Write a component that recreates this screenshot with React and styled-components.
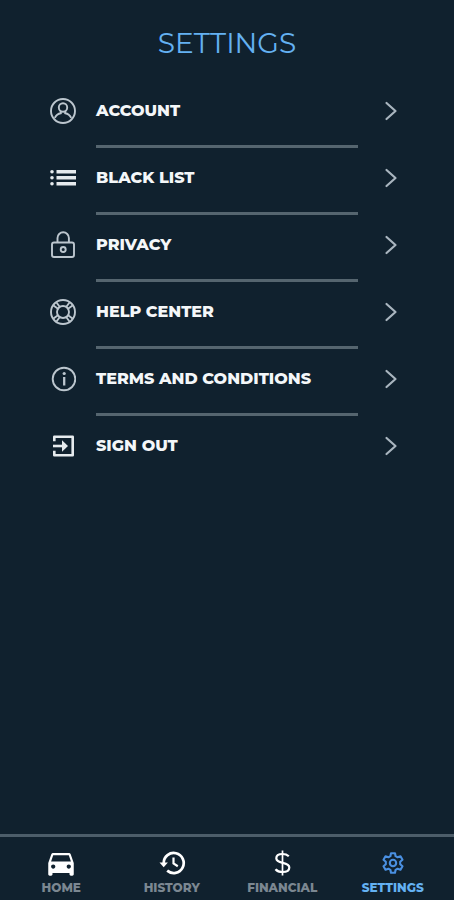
import React from 'react'
import styled, { createGlobalStyle } from 'styled-components'
import { MdDirectionsCar } from 'react-icons/md'

const AccountIcon = () => (
  <svg width="26" height="26" viewBox="0 0 26 26" fill="none" stroke="currentColor" strokeWidth="1.9">
    <circle cx="13" cy="13" r="12" />
    <circle cx="13" cy="9.5" r="4.2" />
    <path d="M10.8 13v2.2c-3 .5-4.9 2.3-6 4.6M15.2 13v2.2c3 .5 4.9 2.3 6 4.6" />
  </svg>
)

const ListIcon = () => (
  <svg width="26" height="26" viewBox="0 0 26 26" fill="currentColor">
    <path d="M6.5 5H26v3.5H6.5zM6.5 11H26v3.5H6.5zM6.5 17H26v3.5H6.5z" />
    <circle cx="2" cy="6.7" r="1.8" />
    <circle cx="2" cy="12.7" r="1.8" />
    <circle cx="2" cy="18.7" r="1.8" />
  </svg>
)

const LockIcon = () => (
  <svg width="26" height="28" viewBox="0 0 26 28" fill="none" stroke="currentColor" strokeWidth="1.9">
    <rect x="2" y="11.5" width="22" height="14.5" rx="2" />
    <path d="M7.5 11.5V7a5.700 5.700 0 0 1 11.400 0v4.500" />
    <circle cx="13.2" cy="18.5" r="2.5" />
  </svg>
)

const HelpIcon = () => (
  <svg width="26" height="26" viewBox="0 0 26 26" fill="none" stroke="currentColor" strokeWidth="1.9">
    <circle cx="13" cy="13" r="12" />
    <circle cx="13" cy="13" r="6" />
    <path d="M3.5 6.5 8.3 10M6.5 3.5 10 8.3M22.5 6.5 17.7 10M19.5 3.5 16 8.3M3.5 19.5 8.3 16M6.5 22.5 10 17.7M22.5 19.5 17.7 16M19.5 22.5 16 17.7" />
  </svg>
)

const InfoIcon = () => (
  <svg width="26" height="26" viewBox="0 0 26 26" fill="none" stroke="currentColor" strokeWidth="1.9">
    <circle cx="14" cy="13" r="11.3" />
    <path d="M14.2 11v8.5" strokeWidth="2.3" />
    <circle cx="14.2" cy="7.5" r="1.6" fill="currentColor" stroke="none" />
  </svg>
)

const SignOutIcon = () => (
  <svg width="26" height="26" viewBox="0 0 26 26" fill="none" stroke="currentColor" strokeWidth="2.6" strokeLinejoin="round">
    <path d="M4.3 8.2V3.800h18.400v18.400H4.300v-4.400" />
    <path d="M3 13h12" />
    <path d="M12 7.300 18 13l-6 5.700z" fill="currentColor" stroke="none" />
  </svg>
)

const HistoryIcon = () => (
  <svg width="28" height="28" viewBox="0 0 28 28" fill="none" stroke="currentColor" strokeWidth="2.7">
    <path d="M5.7 14a10 10 0 1 1 3.5 7.6" />
    <path d="M1.5 13.5h8.400l-4.200 4.700z" fill="currentColor" stroke="none" />
    <path d="M15.5 8.5v6l4.300 2.700" strokeWidth="2.2" />
  </svg>
)

const ChevronIcon = () => (
  <svg width="14" height="20" viewBox="0 0 14 20" fill="none" stroke="currentColor" strokeWidth="2.2">
    <path d="M2.5 2l9 8-9 8" strokeLinecap="round" strokeLinejoin="round" />
  </svg>
)

const DollarIcon = () => (
  <svg width="26" height="26" viewBox="0 0 26 26" fill="none" stroke="currentColor" strokeWidth="2.2">
    <path d="M13.5 .5v25" strokeWidth="1.7" />
    <path d="M19.8 6.2C18.300 4.800 16.200 4 13.500 4 9.500 4 7.300 5.700 7.300 8.200c0 6.400 13 2.800 13 9.200 0 2.700-2.600 4.600-6.800 4.600-3 0-5.500-1-7-2.800" />
  </svg>
)

const GearIcon = () => (
  <svg width="22" height="22" viewBox="0 0 22 22" fill="none" stroke="currentColor" strokeWidth="2.1" strokeLinejoin="round">
    <path d="M9 1.2h4l.6 3 2 1.100 2.900-1 2 3.400-2.300 2v2.600l2.300 2-2 3.400-2.900-1-2 1.100-.6 3H9l-.6-3-2-1.100-2.900 1-2-3.400 2.300-2V9.700l-2.300-2 2-3.400 2.900 1 2-1.100z" />
    <circle cx="11" cy="11" r="3.2" />
  </svg>
)

const menus = [
  { name: 'ACCOUNT', icon: <AccountIcon /> },
  { name: 'BLACK LIST', icon: <ListIcon />, bright: true },
  { name: 'PRIVACY', icon: <LockIcon /> },
  { name: 'HELP CENTER', icon: <HelpIcon /> },
  { name: 'TERMS AND CONDITIONS', icon: <InfoIcon /> },
  { name: 'SIGN OUT', icon: <SignOutIcon />, bright: true },
]

const tabs = [
  { name: 'HOME', icon: <MdDirectionsCar size={34} /> },
  { name: 'HISTORY', icon: <HistoryIcon /> },
  { name: 'FINANCIAL', icon: <DollarIcon /> },
  { name: 'SETTINGS', icon: <GearIcon />, active: true },
]

function App() {
  return (
    <Container>
      <GlobalStyle />
      <Title>SETTINGS</Title>
      <MenuList>
        {menus.map((menu) => (
          <li key={menu.name}>
            <MenuLink href="#">
              <MenuIcon $bright={menu.bright}>{menu.icon}</MenuIcon>
              <MenuName>{menu.name}</MenuName>
              <Arrow><ChevronIcon /></Arrow>
            </MenuLink>
          </li>
        ))}
      </MenuList>
      <TabBar>
        {tabs.map((tab) => (
          <Tab key={tab.name} href="#" $active={tab.active} aria-current={tab.active ? 'page' : undefined}>
            <TabIcon $active={tab.active}>{tab.icon}</TabIcon>
            {tab.name}
          </Tab>
        ))}
      </TabBar>
    </Container>
  )
}

export default App

const GlobalStyle = createGlobalStyle`
  * {
    box-sizing: border-box;
  }
  body {
    margin: 0;
    background: #10212e;
    font-family: Montserrat, Inter, sans-serif;
  }
  a {
    color: inherit;
    text-decoration: none;
  }
  svg {
    display: block;
    flex-shrink: 0;
  }
`

const Container = styled.div`
  display: flex;
  flex-direction: column;
  min-height: 100vh;
`

const Title = styled.h1`
  margin: 0;
  padding: 25px 0 20px;
  color: #64b1f2;
  font-size: 28px;
  font-weight: 400;
  line-height: 36px;
  text-align: center;
`

const MenuList = styled.ul`
  flex: 1;
  margin: 0;
  padding: 0 56px 0 50px;
  list-style: none;
`

const MenuName = styled.span`
  height: 67px;
  padding-bottom: 4px;
  border-bottom: 3px solid #55656f;
  color: #f4f7f9;
  font-size: 16px;
  font-weight: 800;
  line-height: 60px;
  white-space: nowrap;
`

const MenuLink = styled.a`
  display: grid;
  grid-template-columns: 46px 1fr 40px;

  li:last-child & ${MenuName} {
    border-bottom-color: transparent;
  }
`

const MenuIcon = styled.span`
  display: flex;
  align-items: center;
  height: 60px;
  color: ${(props) => (props.$bright ? '#e6ebee' : '#bcc6ce')};
`

const Arrow = styled.span`
  display: flex;
  align-items: center;
  justify-content: flex-end;
  height: 60px;
  color: #a9b5bf;
`

const TabBar = styled.nav`
  display: grid;
  grid-template-columns: repeat(4, 1fr);
  padding: 10px 6px 2px;
  border-top: 3px solid #4c5d69;
`

const Tab = styled.a`
  display: flex;
  flex-direction: column;
  align-items: center;
  color: ${(props) => (props.$active ? '#64b1f2' : '#7b8791')};
  font-size: 12px;
  font-weight: 800;
  line-height: 20px;
`

const TabIcon = styled.span`
  display: flex;
  align-items: center;
  height: 31px;
  color: ${(props) => (props.$active ? '#4a90e2' : '#ffffff')};
`
